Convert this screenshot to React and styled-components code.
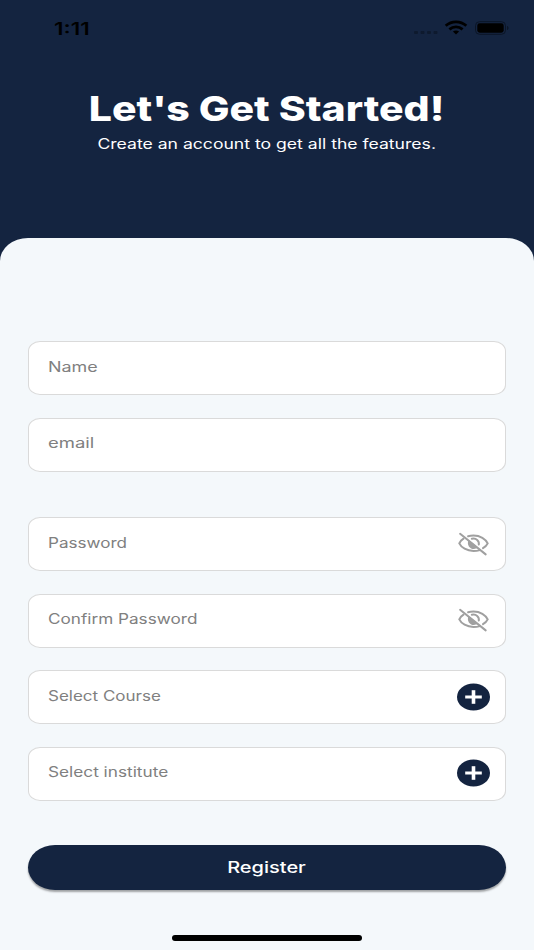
import styled, { createGlobalStyle, ThemeProvider } from 'styled-components';

const theme = {
  navy: '#142440',
  sheet: '#f4f8fb',
  border: '#dadada',
  placeholder: '#808080',
  icon: '#a0a0a0',
};

const GlobalStyle = createGlobalStyle`
  *, *:before, *:after {
    box-sizing: border-box;
  }
  body {
    margin: 0;
    background: ${theme.navy};
    font-family: Inter, 'Noto Sans', sans-serif;
  }
`;

const Screen = styled.div`
  display: flex;
  flex-direction: column;
  width: 534px;
  height: 950px;
  overflow: hidden;
  background: ${props => props.theme.navy};
`;

const StatusBar = styled.div`
  display: flex;
  align-items: center;
  justify-content: space-between;
  height: 56px;
  padding: 0 24px 0 53.5px;
  color: black;
`;

const Stretch = styled.span`
  display: inline-block;
  white-space: nowrap;
  transform: scaleX(${props => props.$x});
  transform-origin: ${props => props.$origin || 'left'} center;
`;

const Time = styled.div`
  padding-top: 1px;
  font-size: 17px;
  line-height: 20px;
  font-weight: 600;
`;

const Header = styled.header`
  height: 181.5px;
  padding-top: 33px;
  color: white;
  text-align: center;
`;

const Title = styled.h1`
  margin: 0;
  font-size: 34px;
  line-height: 40px;
  font-weight: 800;
`;

const Subtitle = styled.p`
  margin: 5px 0 0;
  font-size: 14px;
  line-height: 20px;
`;

const Sheet = styled.main`
  display: flex;
  flex-direction: column;
  align-items: center;
  flex: 1;
  padding: 103.5px 28px 0;
  border-radius: 28px 28px 0 0 / 23px 23px 0 0;
  background: ${props => props.theme.sheet};
`;

const Group = styled.div`
  display: grid;
  gap: 22.5px;
  width: 100%;
  margin-bottom: ${props => props.$space}px;
`;

const Field = styled.div`
  display: flex;
  align-items: center;
  justify-content: space-between;
  height: 54px;
  padding: 0 15px 0 19px;
  border: 1px solid ${props => props.theme.border};
  border-radius: 12px / 10px;
  background: white;
`;

const Placeholder = styled.span`
  padding-bottom: 3px;
  color: ${props => props.theme.placeholder};
  font-size: 14px;
  line-height: 20px;
`;

const RegisterButton = styled.button`
  width: 478px;
  height: 45px;
  flex: none;
  padding: 0 1px 1px 0;
  border: 0;
  border-radius: 27px / 22.5px;
  background: ${props => props.theme.navy};
  box-shadow: 0 2px 2px rgba(0, 0, 0, 0.35);
  color: white;
  font-family: inherit;
  font-size: 16px;
  font-weight: 500;
`;

const HomeIndicator = styled.div`
  width: 190px;
  height: 6px;
  flex: none;
  margin-top: 45px;
  border-radius: 3px;
  background: black;
`;

const StatusIcons = () => (
  <svg width="96" height="18" viewBox="0 0 96 18">
    <g fill="#0e1a2e">
      <rect x="0" y="12" width="4" height="3" rx="1" />
      <rect x="6.5" y="12" width="4" height="3" rx="1" />
      <rect x="13" y="12" width="4" height="3" rx="1" />
      <rect x="19.5" y="12" width="4" height="3" rx="1" />
    </g>
    <g fill="none" stroke="black" strokeWidth="2.8">
      <path d="M31.7 6.8 C37.5 1.6 46.5 1.6 52.3 6.8" />
      <path d="M35.4 10.4 C39.3 7 44.7 7 48.6 10.4" />
    </g>
    <path d="M38.9 12.6 C40.6 11 43.4 11 45.1 12.6 L42 15.4 Z" />
    <rect x="61.5" y="2.7" width="30" height="12.6" rx="4" fill="none" stroke="#0b1526" />
    <rect x="63.3" y="4.3" width="26.4" height="9.4" rx="2.4" />
    <path d="M93 7 C95 7.6 95 10.4 93 11 Z" fill="#0b1526" />
  </svg>
);

const EyeOff = styled(({ className }) => (
  <svg className={className} width="32" height="24" viewBox="0 0 32 24">
    <g fill="none" stroke="currentColor" strokeWidth="2" strokeLinecap="round">
      <path d="M2.1 1.8 L27.7 22.4" />
      <path d="M5.5 6.7 C3.4 8 2 9.6 1.3 11.4 C3.2 15.5 8.8 19 15.5 19 C17.9 19 19.9 18.7 21.9 18.1" />
      <path d="M10.1 4.3 C11.8 3.7 13.5 3.5 15.5 3.5 C22.2 3.5 27.7 7 29.7 11.4 C28.8 13.3 27 15 25 16.2" />
      <path d="M13.8 6.8 C18.1 5.8 21.5 8.8 20.8 12.6" />
    </g>
    <path d="M10.7 8.1 L19.9 15.5 C17 17.9 12.9 17.2 10.9 14.4 C9.6 12.4 9.5 10.1 10.7 8.1 Z" fill="currentColor" />
  </svg>
))`
  margin-bottom: 1px;
  color: ${props => props.theme.icon};
`;

const AddIcon = styled(({ className }) => (
  <svg className={className} width="33" height="28" viewBox="0 0 33 28">
    <ellipse cx="16.5" cy="14" rx="16.5" ry="13.6" fill="currentColor" />
    <path d="M8.2 14 H24.8" stroke="white" strokeWidth="3" />
    <path d="M16.5 7.2 V20.8" stroke="white" strokeWidth="3.6" />
  </svg>
))`
  margin-bottom: 1px;
  color: ${props => props.theme.navy};
`;

const FormField = ({ label, stretch, icon }) => (
  <Field>
    <Placeholder>
      <Stretch $x={stretch}>{label}</Stretch>
    </Placeholder>
    {icon}
  </Field>
);

const App = () => (
  <ThemeProvider theme={theme}>
    <GlobalStyle />
    <Screen>
      <StatusBar>
        <Time>
          <Stretch $x={1.32}>1:11</Stretch>
        </Time>
        <StatusIcons />
      </StatusBar>
      <Header>
        <Title>
          <Stretch $x={1.205} $origin="center">Let's Get Started!</Stretch>
        </Title>
        <Subtitle>
          <Stretch $x={1.257} $origin="center">Create an account to get all the features.</Stretch>
        </Subtitle>
      </Header>
      <Sheet>
        <Group $space={45.5}>
          <FormField label="Name" stretch={1.28} />
          <FormField label="email" stretch={1.32} />
        </Group>
        <Group $space={44.5}>
          <FormField label="Password" stretch={1.22} icon={<EyeOff />} />
          <FormField label="Confirm Password" stretch={1.225} icon={<EyeOff />} />
          <FormField label="Select Course" stretch={1.215} icon={<AddIcon />} />
          <FormField label="Select institute" stretch={1.23} icon={<AddIcon />} />
        </Group>
        <RegisterButton type="button">
          <Stretch $x={1.25} $origin="center">Register</Stretch>
        </RegisterButton>
        <HomeIndicator />
      </Sheet>
    </Screen>
  </ThemeProvider>
);

export default App;
